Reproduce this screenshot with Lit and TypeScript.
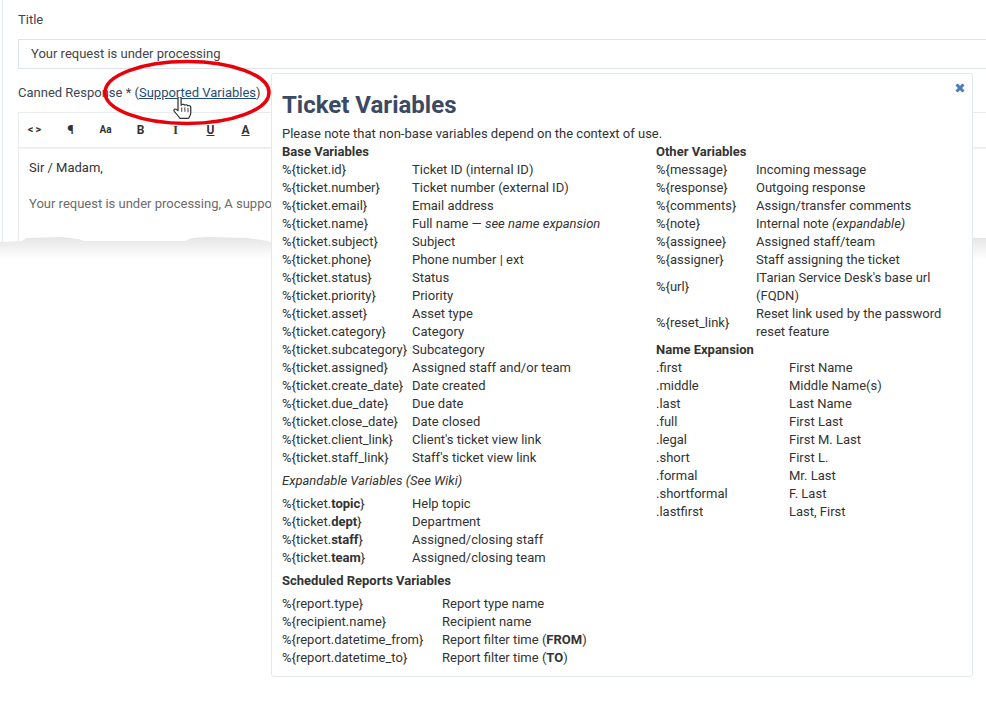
import { LitElement, html, css } from "lit";
import { customElement } from "lit/decorators.js";

type Row = [unknown, unknown];

const baseVars: Row[] = [
  ["%{ticket.id}", "Ticket ID (internal ID)"],
  ["%{ticket.number}", "Ticket number (external ID)"],
  ["%{ticket.email}", "Email address"],
  ["%{ticket.name}", html`Full name — <em>see name expansion</em>`],
  ["%{ticket.subject}", "Subject"],
  ["%{ticket.phone}", "Phone number | ext"],
  ["%{ticket.status}", "Status"],
  ["%{ticket.priority}", "Priority"],
  ["%{ticket.asset}", "Asset type"],
  ["%{ticket.category}", "Category"],
  ["%{ticket.subcategory}", "Subcategory"],
  ["%{ticket.assigned}", "Assigned staff and/or team"],
  ["%{ticket.create_date}", "Date created"],
  ["%{ticket.due_date}", "Due date"],
  ["%{ticket.close_date}", "Date closed"],
  ["%{ticket.client_link}", "Client's ticket view link"],
  ["%{ticket.staff_link}", "Staff's ticket view link"],
];

const expandable: Row[] = [
  [html`%{ticket.<b>topic</b>}`, "Help topic"],
  [html`%{ticket.<b>dept</b>}`, "Department"],
  [html`%{ticket.<b>staff</b>}`, "Assigned/closing staff"],
  [html`%{ticket.<b>team</b>}`, "Assigned/closing team"],
];

const reports: Row[] = [
  ["%{report.type}", "Report type name"],
  ["%{recipient.name}", "Recipient name"],
  ["%{report.datetime_from}", html`Report filter time (<b>FROM</b>)`],
  ["%{report.datetime_to}", html`Report filter time (<b>TO</b>)`],
];

const otherVars: Row[] = [
  ["%{message}", "Incoming message"],
  ["%{response}", "Outgoing response"],
  ["%{comments}", "Assign/transfer comments"],
  ["%{note}", html`Internal note <em>(expandable)</em>`],
  ["%{assignee}", "Assigned staff/team"],
  ["%{assigner}", "Staff assigning the ticket"],
  ["%{url}", "ITarian Service Desk's base url (FQDN)"],
  ["%{reset_link}", "Reset link used by the password reset feature"],
];

const nameExpansion: Row[] = [
  [".first", "First Name"],
  [".middle", "Middle Name(s)"],
  [".last", "Last Name"],
  [".full", "First Last"],
  [".legal", "First M. Last"],
  [".short", "First L."],
  [".formal", "Mr. Last"],
  [".shortformal", "F. Last"],
  [".lastfirst", "Last, First"],
];

const tools = [
  ["<>", "code"],
  ["¶", "para"],
  ["Aa", "small"],
  ["B", ""],
  ["I", "serif"],
  ["U", "under"],
  ["A", "under"],
];

@customElement("app-root")
export class AppRoot extends LitElement {
  static styles = css`
    :host {
      display: block;
      position: relative;
      width: 986px;
      height: 726px;
      overflow: hidden;
      background: #fff;
      font-family: Roboto, "Liberation Sans", sans-serif;
      font-size: 13px;
      line-height: 18px;
      color: #333;
    }
    .page {
      height: 243px;
      box-sizing: border-box;
      margin-left: 2px;
      padding: 11px 0 0 15px;
      border-left: 1px solid #e3e8f0;
      overflow: hidden;
    }
    .label {
      color: #3c4654;
    }
    .input {
      margin: 10px -1px 0 0;
      height: 28px;
      padding-left: 12px;
      line-height: 28px;
      border: 1px solid #dfe3ea;
      color: #444;
    }
    .canned {
      margin-top: 15px;
    }
    .canned a {
      color: #1f4e79;
      text-decoration: underline;
    }
    .toolbar {
      display: flex;
      box-sizing: border-box;
      margin: 10px -1px 0 0;
      height: 36px;
      align-items: center;
      border: 1px solid #e8ebf0;
      border-right: 0;
      box-shadow: 0 1px 0 #f2f3f5;
    }
    .tools {
      display: flex;
      margin-left: -1px;
    }
    .tool {
      width: 35px;
      text-align: center;
      font-size: 12px;
      font-weight: 700;
      color: #333;
    }
    .tool.code {
      font-size: 11px;
      letter-spacing: 2px;
    }
    .tool.para {
      font-size: 13px;
    }
    .tool.small {
      font-size: 10px;
    }
    .tool.serif {
      font-family: "Liberation Serif", serif;
    }
    .tool.under {
      text-decoration: underline;
    }
    .editor {
      height: 92px;
      padding: 11px 10px;
      border-left: 1px solid #e8ebf0;
    }
    .editor p {
      margin: 0 0 18px;
    }
    .editor .muted {
      color: #6b6b6b;
    }
    .tear {
      position: absolute;
      left: 0;
      top: 235px;
    }
    .oval {
      position: absolute;
      left: 100px;
      top: 56px;
    }
    .hand {
      position: absolute;
      left: 173px;
      top: 97px;
    }
    .popup {
      position: absolute;
      left: 271px;
      top: 73px;
      width: 702px;
      height: 604px;
      box-sizing: border-box;
      padding: 15px 10px 0;
      background: #fff;
      border: 1px solid #e3e8f0;
      border-radius: 3px;
    }
    .close {
      position: absolute;
      right: 6px;
      top: 8px;
    }
    h1 {
      margin: 0;
      font-size: 24px;
      line-height: 32px;
      font-weight: 700;
      color: #3b4a63;
    }
    .note {
      margin-top: 4px;
    }
    .cols {
      display: grid;
      grid-template-columns: 374px 1fr;
    }
    h2 {
      margin: 0;
      font-size: 13px;
      line-height: 18px;
      font-weight: 700;
      color: #333;
    }
    .sub {
      margin: 5px 0 5px;
    }
    .heading {
      margin: 5px 0;
    }
    .vars {
      display: grid;
      align-items: center;
    }
    .vars.base {
      grid-template-columns: 130px 1fr;
    }
    .vars.report {
      grid-template-columns: 160px 1fr;
    }
    .vars.other {
      grid-template-columns: 100px 205px;
    }
    .vars.expansion {
      grid-template-columns: 133px 1fr;
    }
  `;

  private rows(rows: Row[], cls: string) {
    return html`<div class="vars ${cls}">
      ${rows.map(([k, v]) => html`<div>${k}</div><div>${v}</div>`)}
    </div>`;
  }

  render() {
    return html`
      <div class="page">
        <div class="label">Title</div>
        <div class="input">Your request is under processing</div>
        <div class="label canned">
          Canned Response * (<a>Supported Variables</a>)
        </div>
        <div class="toolbar">
          <div class="tools">
            ${tools.map(
              ([t, cls]) => html`<span class="tool ${cls}">${t}</span>`
            )}
          </div>
        </div>
        <div class="editor">
          <p>Sir / Madam,</p>
          <p class="muted">Your request is under processing, A support</p>
        </div>
      </div>

      <svg class="tear" width="986" height="30" viewBox="0 0 986 30">
        <defs>
          <linearGradient
            id="fade"
            gradientUnits="userSpaceOnUse"
            x1="0"
            y1="3"
            x2="0"
            y2="24"
          >
            <stop offset="0" stop-color="#e6e6e6" />
            <stop offset="1" stop-color="#ffffff" />
          </linearGradient>
        </defs>
        <path
          d="M0 7L22 6L26 3L62 2L78 4L84 6L185 6L192 3L208 2L248 3L262 5L275 8L960 8L972 3L986 3V30H0Z"
          fill="url(#fade)"
        />
      </svg>

      <div class="popup">
        <svg class="close" width="12" height="12" viewBox="0 0 12 12">
          <path
            d="M2.500 2.500L9.500 9.500M9.500 2.500L2.500 9.500"
            stroke="#4a7ab8"
            stroke-width="3"
          />
        </svg>
        <h1>Ticket Variables</h1>
        <div class="note">
          Please note that non-base variables depend on the context of use.
        </div>
        <div class="cols">
          <div>
            <h2>Base Variables</h2>
            ${this.rows(baseVars, "base")}
            <div class="sub"><em>Expandable Variables (See Wiki)</em></div>
            ${this.rows(expandable, "base")}
            <h2 class="heading">Scheduled Reports Variables</h2>
            ${this.rows(reports, "report")}
          </div>
          <div>
            <h2>Other Variables</h2>
            ${this.rows(otherVars, "other")}
            <h2>Name Expansion</h2>
            ${this.rows(nameExpansion, "expansion")}
          </div>
        </div>
      </div>

      <svg class="oval" width="180" height="74" viewBox="0 0 180 74">
        <ellipse
          cx="87"
          cy="36.500"
          rx="82"
          ry="31"
          fill="none"
          stroke="#e8000b"
          stroke-width="3.500"
        />
      </svg>
      <svg
        class="hand"
        width="20"
        height="23"
        viewBox="1 1.500 16 21"
        preserveAspectRatio="none"
      >
        <path
          d="M5 2.500c0-1.600 2.500-1.600 2.500 0V9l.3-.4c1-.8 2.300-.3 2.500.4 1-.8 2.300-.3 2.500.6 1-.6 2.400 0 2.400 1.200V16c0 2-1 3.500-1.800 5H6.500C5.500 19 3.500 17 2 14.500c-.8-1.500.8-2.800 2-1.500l1 1Z"
          fill="#fff"
          stroke="#333"
          stroke-width="1"
          stroke-linejoin="round"
        />
        <path d="M8 11v4M10.500 11v4M13 11.500v4" stroke="#333" stroke-width=".8" />
      </svg>
    `;
  }
}
